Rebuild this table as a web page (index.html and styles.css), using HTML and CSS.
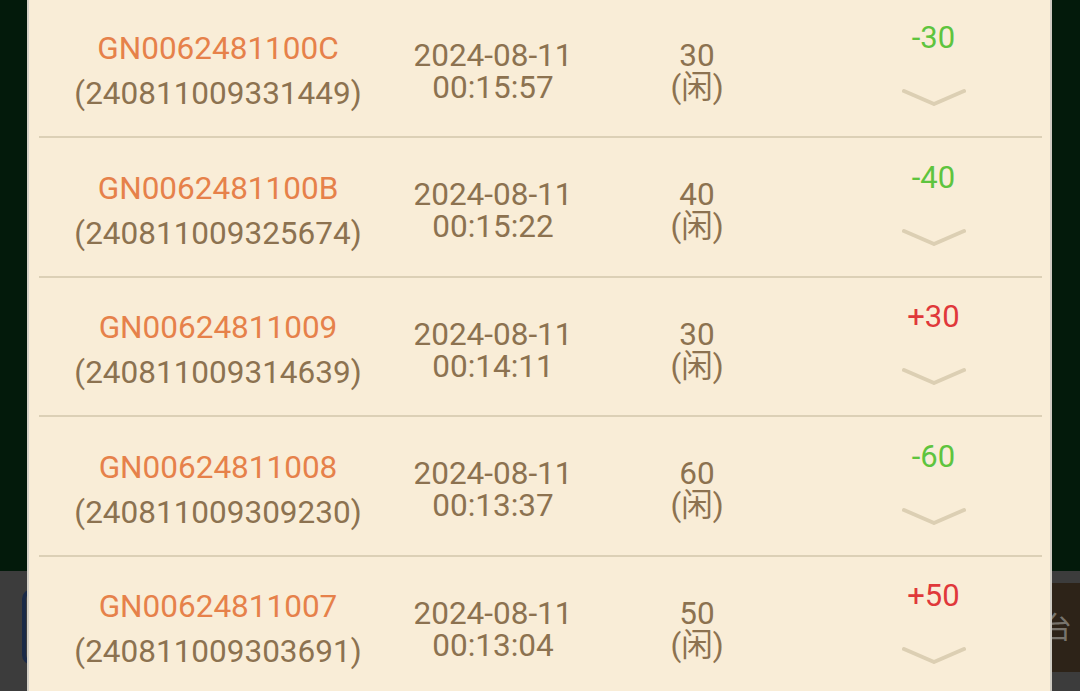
FILE: index.html
```html
<!DOCTYPE html>
<html lang="zh">
<head>
<meta charset="utf-8">
<title>记录</title>
<link rel="stylesheet" href="styles.css">
</head>
<body>
<div class="backdrop">
  <div class="backdrop-top"></div>
  <div class="backdrop-bar">
    <div class="bar-btn bar-btn-left"></div>
    <div class="bar-btn bar-btn-right">平台</div>
  </div>
</div>

<div class="panel">
  <div class="row">
    <div class="col col-id"><div class="order">GN0062481100C</div><div class="serial">(240811009331449)</div></div>
    <div class="col col-time"><div>2024-08-11</div><div>00:15:57</div></div>
    <div class="col col-bet"><div>30</div><div>(闲)</div></div>
    <div class="col col-res"><div class="amt lose">-30</div><svg class="chev" viewBox="0 0 64 20" width="64" height="20"><polyline points="2,4 32,17 62,4"/></svg></div>
  </div>
  <div class="row">
    <div class="col col-id"><div class="order">GN0062481100B</div><div class="serial">(240811009325674)</div></div>
    <div class="col col-time"><div>2024-08-11</div><div>00:15:22</div></div>
    <div class="col col-bet"><div>40</div><div>(闲)</div></div>
    <div class="col col-res"><div class="amt lose">-40</div><svg class="chev" viewBox="0 0 64 20" width="64" height="20"><polyline points="2,4 32,17 62,4"/></svg></div>
  </div>
  <div class="row">
    <div class="col col-id"><div class="order">GN00624811009</div><div class="serial">(240811009314639)</div></div>
    <div class="col col-time"><div>2024-08-11</div><div>00:14:11</div></div>
    <div class="col col-bet"><div>30</div><div>(闲)</div></div>
    <div class="col col-res"><div class="amt win">+30</div><svg class="chev" viewBox="0 0 64 20" width="64" height="20"><polyline points="2,4 32,17 62,4"/></svg></div>
  </div>
  <div class="row">
    <div class="col col-id"><div class="order">GN00624811008</div><div class="serial">(240811009309230)</div></div>
    <div class="col col-time"><div>2024-08-11</div><div>00:13:37</div></div>
    <div class="col col-bet"><div>60</div><div>(闲)</div></div>
    <div class="col col-res"><div class="amt lose">-60</div><svg class="chev" viewBox="0 0 64 20" width="64" height="20"><polyline points="2,4 32,17 62,4"/></svg></div>
  </div>
  <div class="row">
    <div class="col col-id"><div class="order">GN00624811007</div><div class="serial">(240811009303691)</div></div>
    <div class="col col-time"><div>2024-08-11</div><div>00:13:04</div></div>
    <div class="col col-bet"><div>50</div><div>(闲)</div></div>
    <div class="col col-res"><div class="amt win">+50</div><svg class="chev" viewBox="0 0 64 20" width="64" height="20"><polyline points="2,4 32,17 62,4"/></svg></div>
  </div>
</div>
</body>
</html>
```

FILE: styles.css
```css
html, body {
  margin: 0;
  padding: 0;
  width: 1080px;
  height: 691px;
  overflow: hidden;
}
body {
  position: relative;
  font-family: Roboto, "Noto Sans CJK SC", sans-serif;
  background: #031a0b;
}

.backdrop {
  display: flex;
  flex-direction: column;
  height: 691px;
}
.backdrop-top {
  height: 571px;
  background: #031a0b;
}
.backdrop-bar {
  flex: 1;
  background: #3c3c3c;
  display: flex;
  justify-content: space-between;
  align-items: flex-start;
  padding-top: 12px;
}
.bar-btn {
  height: 89px;
  box-sizing: border-box;
}
.bar-btn-left {
  width: 200px;
  margin-left: 22px;
  margin-top: 6px;
  height: 76px;
  border: 4px solid #1a2a48;
  border-radius: 10px;
  background: #3c3c3c;
}
.bar-btn-right {
  width: 180px;
  background: #2d2318;
  color: #77736c;
  font-size: 30px;
  line-height: 89px;
  text-align: right;
  padding-right: 10px;
  margin-right: -2px;
}

.panel {
  position: absolute;
  left: 27px;
  top: -1.5px;
  width: 1025px;
  height: 700px;
  box-sizing: border-box;
  background: #f9edd7;
  border-left: 2px solid #d4d0c6;
  border-right: 2px solid #cfcbc2;
}

.row {
  display: grid;
  grid-template-columns: 358px 192px 216px 1fr;
  height: 137.5px;
  margin: 0 8px 0 10px;
  border-bottom: 2px solid #dcd0b6;
  color: #8c7250;
  font-size: 31.5px;
  text-align: center;
}

.col-id {
  padding-top: 27.5px;
  line-height: 45px;
}
.order {
  color: #e6814a;
}
.col-time, .col-bet {
  padding-top: 41px;
  line-height: 32px;
}
.col-res {
  padding-top: 19.5px;
  padding-left: 20px;
  display: flex;
  flex-direction: column;
  align-items: center;
}
.amt {
  font-size: 31px;
  line-height: 40px;
}
.lose { color: #5ec43e; }
.win { color: #e0383a; }
.chev {
  margin-top: 29px;
  display: block;
}
.chev polyline {
  fill: none;
  stroke: #dccfb3;
  stroke-width: 4;
  stroke-linecap: round;
  stroke-linejoin: round;
}
```
